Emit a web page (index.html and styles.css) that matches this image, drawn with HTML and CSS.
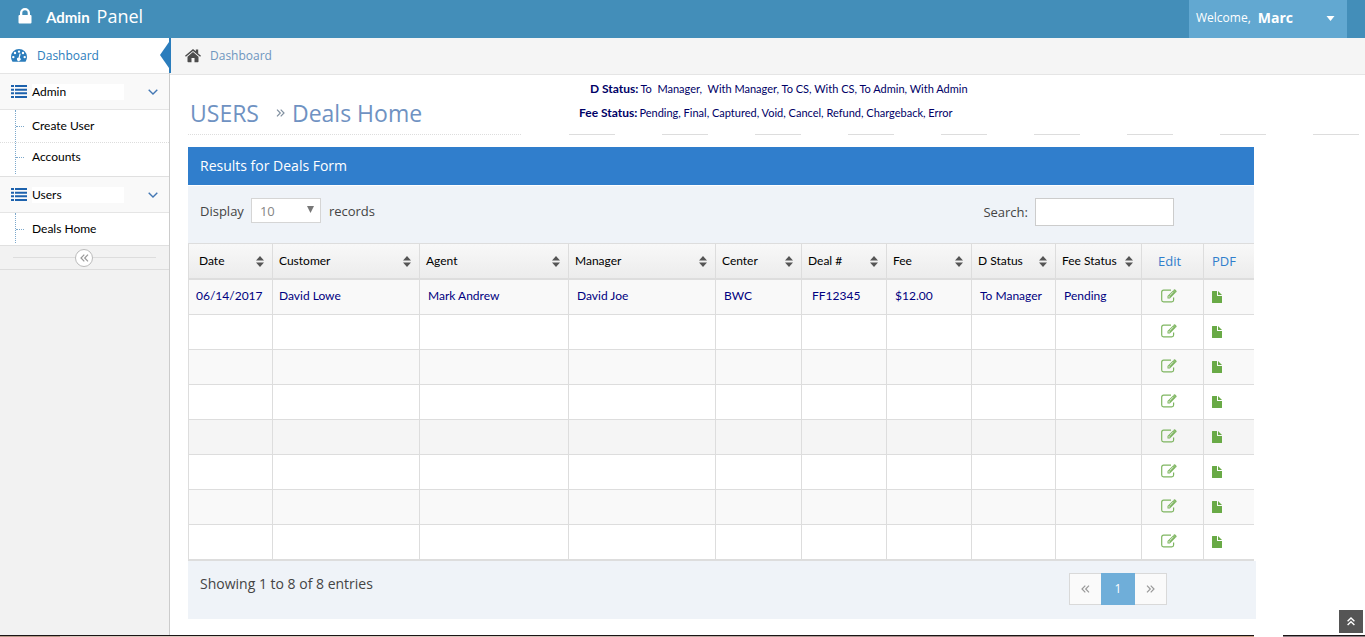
FILE: index.html
```html
<!DOCTYPE html>
<html lang="en">
<head>
<meta charset="utf-8">
<meta name="viewport" content="width=device-width, initial-scale=1">
<title>Admin Panel - Deals Home</title>
<link rel="stylesheet" href="styles.css">
</head>
<body>
<svg class="sprite" aria-hidden="true">
  <symbol id="lock" viewBox="0 0 14 16"><path fill-rule="evenodd" d="M2 7V5a5 5 0 0 1 10 0v2h.5q1 0 1 1v6.500q0 1-1 1h-11q-1 0-1-1V8q0-1 1-1zM4.300 7h5.400V5a2.700 2.700 0 0 0-5.400 0z"/></symbol>
  <symbol id="gauge" viewBox="0 0 16 13"><path fill-rule="evenodd" d="M8 0a8 8 0 0 1 8 8q0 2.300-1.200 4.300-.3.500-.8.500H2q-.5 0-.8-.5Q0 10.300 0 8a8 8 0 0 1 8-8zM8 1.400a1.200 1.200 0 1 0 0 2.400 1.200 1.200 0 0 0 0-2.400zM4 2.800a1.200 1.200 0 1 0 0 2.400 1.200 1.200 0 0 0 0-2.400zm8 0a1.200 1.200 0 1 0 0 2.400 1.200 1.200 0 0 0 0-2.400zM2.300 6.900a1.200 1.200 0 1 0 0 2.400 1.200 1.200 0 0 0 0-2.400zm11.400 0a1.200 1.200 0 1 0 0 2.400 1.200 1.200 0 0 0 0-2.400zM8.500 4.500l-.9 3.900a1.800 1.800 0 1 0 1.200.3l.9-3.900z"/></symbol>
  <symbol id="list" viewBox="0 0 16 13"><path d="M0 0h3v2H0zM4 0h12v2H4zM0 3.700h3v2H0zM4 3.700h12v2H4zM0 7.300h3v2H0zM4 7.300h12v2H4zM0 11h3v2H0zM4 11h12v2H4z"/></symbol>
  <symbol id="down" viewBox="0 0 10 6"><path d="M.7.800L5 5 9.300.800" fill="none" stroke="currentColor" stroke-width="1.400"/></symbol>
  <symbol id="home" viewBox="0 0 16 14"><path d="M8 3.100l5.500 4.600v4.800q0 .7-.7.700H9.500V9h-3v4.200H3.200q-.7 0-.7-.7V7.700z"/><path d="M8 0l2.800 2.300V.500h2.400v3.900L16 6.800l-.9 1L8 1.900.9 7.800l-.9-1z"/></symbol>
  <symbol id="raquo" viewBox="0 0 9 8"><path d="M1 .600L4.300 4 1 7.400M4.700.600L8 4 4.700 7.400" fill="none" stroke="currentColor" stroke-width="1.200"/></symbol>
  <symbol id="laquo" viewBox="0 0 9 8"><path d="M8 .600L4.700 4 8 7.400M4.300.600L1 4l3.300 3.400" fill="none" stroke="currentColor" stroke-width="1.200"/></symbol>
  <symbol id="up2" viewBox="0 0 8 9"><path d="M.6 4.300L4 1l3.400 3.300M.6 8L4 4.700 7.400 8" fill="none" stroke="currentColor" stroke-width="1.400"/></symbol>
  <symbol id="sort" viewBox="0 0 8 11"><path d="M4 0l4 4.500H0zM0 6.500h8L4 11z"/></symbol>
  <symbol id="tri" viewBox="0 0 8 5"><path d="M0 0h8L4 5z"/></symbol>
  <symbol id="pick" viewBox="0 0 7 7"><path d="M0 0h7L3.500 7z"/></symbol>
  <symbol id="edit" viewBox="0 0 16 14"><path d="M10 1.200H2.500A1.800 1.800 0 0 0 .7 3V11A1.800 1.800 0 0 0 2.500 12.800h8.300a1.800 1.800 0 0 0 1.800-1.800V8.500" fill="none" stroke="currentColor" stroke-width="1.200"/><path fill-rule="evenodd" d="M12.400 1.200l2.400 2.400-5.900 5.900H6.500V7.100zM7.500 7.600v.9h.9l.5-.5-.9-.9zM12.200 2.700L8.600 6.300l.4.400 3.600-3.600zM13 .600q.6-.6 1.200 0l1.200 1.200q.6.600 0 1.200l-.5.500L12.500 1.100z"/></symbol>
  <symbol id="file" viewBox="0 0 10 12"><path d="M0 .500Q0 0 .5 0H5v4.500q0 .5.500.5H10v6.500q0 .5-.5.500h-9Q0 12 0 11.500z"/><path d="M6 0l4 4H6z"/></symbol>
</svg>

<header class="topbar">
  <a class="brand" href="#"><svg class="i-lock"><use href="#lock"/></svg><strong>Admin</strong><span>Panel</span></a>
  <button class="user" type="button"><span>Welcome,</span><strong>Marc</strong><svg class="i-caret"><use href="#tri"/></svg></button>
</header>

<div class="body">
  <nav class="sidebar">
    <a class="item current" href="#"><svg class="i-gauge"><use href="#gauge"/></svg>Dashboard</a>
    <a class="item group" href="#"><svg class="i-list"><use href="#list"/></svg><span>Admin</span><svg class="i-down"><use href="#down"/></svg></a>
    <ul class="sub">
      <li><a href="#">Create User</a></li>
      <li><a href="#">Accounts</a></li>
    </ul>
    <a class="item group" href="#"><svg class="i-list"><use href="#list"/></svg><span>Users</span><svg class="i-down"><use href="#down"/></svg></a>
    <ul class="sub">
      <li><a href="#">Deals Home</a></li>
    </ul>
    <div class="collapse"><button type="button" aria-label="Collapse menu"><svg class="i-quo"><use href="#laquo"/></svg></button></div>
  </nav>

  <main class="main">
    <div class="crumbs"><svg class="i-home"><use href="#home"/></svg><a href="#">Dashboard</a></div>
    <div class="heading">
      <h1>USERS <svg class="i-quo"><use href="#raquo"/></svg> <span>Deals Home</span></h1>
      <dl class="legend">
        <div><dt>D Status:</dt><dd>To&nbsp; Manager,&nbsp; With Manager, To CS, With CS, To Admin, With Admin</dd></div>
        <div><dt>Fee Status:</dt><dd>Pending, Final, Captured, Void, Cancel, Refund, Chargeback, Error</dd></div>
      </dl>
    </div>
    <div class="rule"><span class="dots"></span><span class="dashes"></span></div>

    <section class="panel">
      <h2>Results for Deals Form</h2>
      <div class="tools">
        <div class="display"><label for="count">Display</label>
          <span class="pick"><select id="count"><option>10</option><option>25</option></select><svg class="i-pick"><use href="#pick"/></svg></span>
          <label for="count">records</label></div>
        <div class="search"><label for="q">Search:</label><input id="q" type="text"></div>
      </div>
      <table>
        <colgroup><col class="w84"><col class="w147"><col class="w149"><col class="w147"><col class="w86"><col class="w85"><col class="w85"><col class="w84"><col class="w86"><col class="w62"><col class="w51"></colgroup>
        <thead><tr>
          <th class="first"><button type="button">Date<svg class="i-sort"><use href="#sort"/></svg></button></th>
          <th><button type="button">Customer<svg class="i-sort"><use href="#sort"/></svg></button></th>
          <th><button type="button">Agent<svg class="i-sort"><use href="#sort"/></svg></button></th>
          <th><button type="button">Manager<svg class="i-sort"><use href="#sort"/></svg></button></th>
          <th><button type="button">Center<svg class="i-sort"><use href="#sort"/></svg></button></th>
          <th><button type="button">Deal #<svg class="i-sort"><use href="#sort"/></svg></button></th>
          <th><button type="button">Fee<svg class="i-sort"><use href="#sort"/></svg></button></th>
          <th><button type="button">D Status<svg class="i-sort"><use href="#sort"/></svg></button></th>
          <th><button type="button">Fee Status<svg class="i-sort"><use href="#sort"/></svg></button></th>
          <th class="act edit">Edit</th>
          <th class="act">PDF</th>
        </tr></thead>
        <tbody>
          <tr><td>06/14/2017</td><td class="tight">David Lowe</td><td>Mark Andrew</td><td>David Joe</td><td>BWC</td><td class="loose">FF12345</td><td>$12.00</td><td>To Manager</td><td>Pending</td><td class="edit"><a href="#" aria-label="Edit"><svg class="i-edit"><use href="#edit"/></svg></a></td><td class="pdf"><a href="#" aria-label="PDF"><svg class="i-file"><use href="#file"/></svg></a></td></tr>
          <tr><td></td><td></td><td></td><td></td><td></td><td></td><td></td><td></td><td></td><td class="edit"><a href="#" aria-label="Edit"><svg class="i-edit"><use href="#edit"/></svg></a></td><td class="pdf"><a href="#" aria-label="PDF"><svg class="i-file"><use href="#file"/></svg></a></td></tr>
          <tr><td></td><td></td><td></td><td></td><td></td><td></td><td></td><td></td><td></td><td class="edit"><a href="#" aria-label="Edit"><svg class="i-edit"><use href="#edit"/></svg></a></td><td class="pdf"><a href="#" aria-label="PDF"><svg class="i-file"><use href="#file"/></svg></a></td></tr>
          <tr><td></td><td></td><td></td><td></td><td></td><td></td><td></td><td></td><td></td><td class="edit"><a href="#" aria-label="Edit"><svg class="i-edit"><use href="#edit"/></svg></a></td><td class="pdf"><a href="#" aria-label="PDF"><svg class="i-file"><use href="#file"/></svg></a></td></tr>
          <tr class="hover"><td></td><td></td><td></td><td></td><td></td><td></td><td></td><td></td><td></td><td class="edit"><a href="#" aria-label="Edit"><svg class="i-edit"><use href="#edit"/></svg></a></td><td class="pdf"><a href="#" aria-label="PDF"><svg class="i-file"><use href="#file"/></svg></a></td></tr>
          <tr><td></td><td></td><td></td><td></td><td></td><td></td><td></td><td></td><td></td><td class="edit"><a href="#" aria-label="Edit"><svg class="i-edit"><use href="#edit"/></svg></a></td><td class="pdf"><a href="#" aria-label="PDF"><svg class="i-file"><use href="#file"/></svg></a></td></tr>
          <tr><td></td><td></td><td></td><td></td><td></td><td></td><td></td><td></td><td></td><td class="edit"><a href="#" aria-label="Edit"><svg class="i-edit"><use href="#edit"/></svg></a></td><td class="pdf"><a href="#" aria-label="PDF"><svg class="i-file"><use href="#file"/></svg></a></td></tr>
          <tr><td></td><td></td><td></td><td></td><td></td><td></td><td></td><td></td><td></td><td class="edit"><a href="#" aria-label="Edit"><svg class="i-edit"><use href="#edit"/></svg></a></td><td class="pdf"><a href="#" aria-label="PDF"><svg class="i-file"><use href="#file"/></svg></a></td></tr>
        </tbody>
      </table>
      <div class="foot">
        <p>Showing 1 to 8 of 8 entries</p>
        <div class="pager">
          <button type="button" aria-label="Previous"><svg class="i-quo"><use href="#laquo"/></svg></button>
          <button type="button" class="on">1</button>
          <button type="button" aria-label="Next"><svg class="i-quo"><use href="#raquo"/></svg></button>
        </div>
      </div>
    </section>
  </main>
</div>
<div class="edge"><span class="edge-left"></span><span class="edge-right"></span></div>
<button class="to-top" type="button" aria-label="Back to top"><svg class="i-up"><use href="#up2"/></svg></button>
</body>
</html>
```
FILE: styles.css
```css
* { box-sizing: border-box; }
body {
  margin: 0;
  min-height: 100vh;
  display: flex;
  flex-direction: column;
  position: relative;
  background: #fff;
  color: #444;
  font-family: "Open Sans", sans-serif;
  font-size: 13px;
  line-height: 20px;
}
a { text-decoration: none; color: inherit; }
button { font: inherit; color: inherit; background: none; border: 0; padding: 0; }
svg { display: block; flex: none; fill: currentColor; }
.sprite { position: absolute; width: 0; height: 0; }
.i-lock { width: 14px; height: 16px; }
.i-gauge { width: 16px; height: 13px; }
.i-list { width: 16px; height: 13px; }
.i-down { width: 10px; height: 6px; }
.i-home { width: 16px; height: 14px; color: #4c4c4c; }
.i-quo { width: 9px; height: 8px; }
.i-caret { width: 9px; height: 5px; }
.i-sort { width: 8px; height: 11px; color: #555; }
.i-edit { width: 16px; height: 14px; }
.i-file { width: 10px; height: 12px; }
.i-up { width: 8px; height: 9px; }

.topbar {
  display: flex;
  justify-content: space-between;
  height: 38px;
  padding-right: 18px;
  background: #438eb9;
  color: #fff;
}
.brand { display: flex; align-items: center; padding: 0 0 6px 18px; font-size: 18px; }
.brand strong { margin: 2px 7px 0 14px; font: bold 15px/20px Lato, sans-serif; }
.user {
  display: flex;
  align-items: center;
  width: 158px;
  padding: 0 12px 2px 7px;
  background: #62a8d1;
  font-size: 12px;
}
.user strong { margin-left: 7px; font-size: 14px; }
.user svg { margin-left: auto; }

.body { flex: 1; display: flex; }
.sidebar {
  flex: none;
  width: 170px;
  border-right: 1px solid #ccc;
  background: #f2f2f2;
  color: #000;
  font-family: Lato, sans-serif;
  font-size: 12px;
}
.item {
  display: flex;
  align-items: center;
  height: 36px;
  padding: 0 11px;
  border-bottom: 1px solid #e5e5e5;
}
.current {
  position: relative;
  background: #fff;
  color: #2b7dbc;
  font-family: "Open Sans", sans-serif;
}
.current svg { margin-right: 10px; }
.current::before {
  content: "";
  position: absolute;
  right: 0;
  top: 4px;
  border: solid transparent;
  border-width: 13px 9px 13px 0;
  border-right-color: #2b7dbc;
}
.current::after {
  content: "";
  position: absolute;
  right: -2px;
  top: 0;
  width: 2px;
  height: 35px;
  background: #2b7dbc;
}
.group { background: #f9f9f9; }
.group span {
  width: 92px;
  margin-left: 5px;
  background: #fff;
  line-height: 16px;
}
.group .i-list { color: #1d62ad; }
.group .i-down { margin-left: auto; color: #4478b4; }
.sub {
  position: relative;
  margin: 0;
  padding: 0;
  list-style: none;
  background: #fff;
  border-bottom: 1px solid #e0e0e0;
}
.sub::before {
  content: "";
  position: absolute;
  left: 15px;
  top: 0;
  bottom: 2px;
  border-left: 1px dotted #7da9cc;
}
.sub li { display: flex; align-items: center; height: 32px; padding-left: 16px; }
.sub li + li { height: 34px; padding-bottom: 5px; border-top: 1px dotted #ddd; }
.sub li::before { content: ""; width: 8px; margin-right: 8px; border-top: 1px dotted #7da9cc; }
.collapse {
  display: flex;
  justify-content: center;
  height: 24px;
  padding-right: 1px;
  border-bottom: 1px solid #ddd;
  background: linear-gradient(#ddd, #ddd) center / 143px 1px no-repeat;
  align-items: center;
}
.collapse button {
  display: flex;
  align-items: center;
  justify-content: center;
  width: 18px;
  height: 18px;
  border: 1px solid #bbb;
  border-radius: 50%;
  background: #fff;
  color: #999;
}

.main { flex: 1; min-width: 0; }
.crumbs {
  display: flex;
  align-items: center;
  height: 37px;
  padding-left: 15px;
  border-bottom: 1px solid #e5e5e5;
  background: #f5f5f5;
  color: #6e96bf;
  font-size: 12px;
}
.crumbs svg { margin-right: 9px; }
.heading { display: flex; height: 59px; padding-left: 20px; }
.heading h1 {
  display: flex;
  align-items: center;
  margin: 0;
  padding-top: 16px;
  width: 389px;
  color: #6f92c2;
  font-size: 23px;
  font-weight: 400;
  line-height: 32px;
}
.heading h1 svg { margin: 0 7px 0 17px; color: #8090a0; }
.legend { margin: 0; padding-top: 5px; color: #000066; font: 11px/18px Lato, sans-serif; }
.legend div { display: flex; margin-bottom: 6px; }
.legend div:first-child { padding-left: 11px; }
.legend dt { font-size: 12px; font-weight: 700; }
.legend dd { margin: 0 0 0 2px; }
.rule { display: flex; height: 1px; margin-left: 18px; }
.dots { width: 333px; margin-right: 48px; background: repeating-linear-gradient(90deg, #ddd 0 1px, #fff 1px 2px); }
.dashes { flex: 1; background: repeating-linear-gradient(90deg, #ddd 0 46px, #fff 46px 93px); }

.panel { margin: 12px 111px 16px 18px; }
.panel h2 {
  margin: 0 0 1px;
  padding: 0 12px;
  background: #307ecc;
  color: #fff;
  font-size: 14px;
  font-weight: 400;
  line-height: 38px;
}
.tools {
  display: flex;
  justify-content: space-between;
  height: 57px;
  padding: 12px 80px 0 12px;
  background: #eff3f8;
}
.display, .search { display: flex; align-items: center; height: 28px; gap: 7px; }
.display { height: 25px; }
.display label:last-child { margin-left: 1px; }
.pick { position: relative; }
.pick select {
  display: block;
  appearance: none;
  width: 70px;
  height: 25px;
  padding: 0 8px;
  border: 1px solid #d5d5d5;
  border-radius: 0;
  background: #fff;
  color: #858585;
  font: inherit;
}
.i-pick { position: absolute; right: 7px; top: 8px; width: 7px; height: 7px; color: #777; pointer-events: none; }
.search input { width: 139px; height: 28px; border: 1px solid #ccc; background: #fff; font: inherit; }

table {
  width: 100%;
  table-layout: fixed;
  border-spacing: 0;
  border-bottom: 1px solid #ddd;
  color: #000080;
  font-family: Lato, sans-serif;
  font-size: 12px;
  line-height: 20px;
}
.w51 { width: 51px; }
.w62 { width: 62px; }
.w84 { width: 84px; }
.w85 { width: 85px; }
.w86 { width: 86px; }
.w147 { width: 147px; }
.w149 { width: 149px; }
th {
  height: 37px;
  padding: 0 8px 0 6px;
  border: solid #ddd;
  border-width: 1px 0 2px 1px;
  background: linear-gradient(#f8f8f8, #ececec);
  color: #000;
  font-weight: 400;
  text-align: left;
}
th.first { padding-left: 10px; }
th button { display: flex; align-items: center; justify-content: space-between; width: 100%; white-space: nowrap; }
td { height: 35px; padding: 0 0 2px 8px; border: solid #ddd; border-width: 0 0 1px 1px; white-space: nowrap; }
td:first-child { padding-left: 7px; }
td.tight { padding-left: 6px; }
td.loose { padding-left: 10px; }
tbody tr:nth-child(odd) { background: #f9f9f9; }
tbody tr.hover { background: #f5f5f5; }
td a { display: block; color: #69aa46; }
th.act { padding: 0 8px; color: #307ecc; font: 500 13px/20px "Open Sans", sans-serif; }
th.edit { padding-left: 16px; }
td.edit { padding-left: 19px; }
td.edit a { opacity: .85; }
td.pdf { padding-bottom: 0; }

.foot {
  display: flex;
  justify-content: space-between;
  align-items: flex-start;
  height: 58px;
  margin-right: -2px;
  padding: 12px 89px 0 12px;
  background: #eff3f8;
  font-size: 14px;
}
.foot p { margin: 0; line-height: 22px; }
.pager { display: flex; height: 32px; border: 1px solid #d9d9d9; background: #fafafa; color: #999; font-size: 12px; }
.pager button { display: flex; align-items: center; justify-content: center; width: 31px; }
.pager .on { width: 34px; margin: -1px 0; background: #6faed9; color: #fff; }

.edge { display: flex; justify-content: space-between; height: 2px; }
.edge span { border-top: 1px solid #1b1416; }
.edge-left { flex: 1; margin-right: 29px; background: linear-gradient(90deg, #b89a88 0 60px, #d8c8bc 60px 500px, #9a7f7c 1000px, #c9a083); }
.edge-right { width: 82px; background: #8e8084; }
.to-top {
  position: absolute;
  right: 2px;
  bottom: 4px;
  display: flex;
  align-items: center;
  justify-content: center;
  width: 24px;
  height: 23px;
  background: #555;
  color: #fff;
}
```
